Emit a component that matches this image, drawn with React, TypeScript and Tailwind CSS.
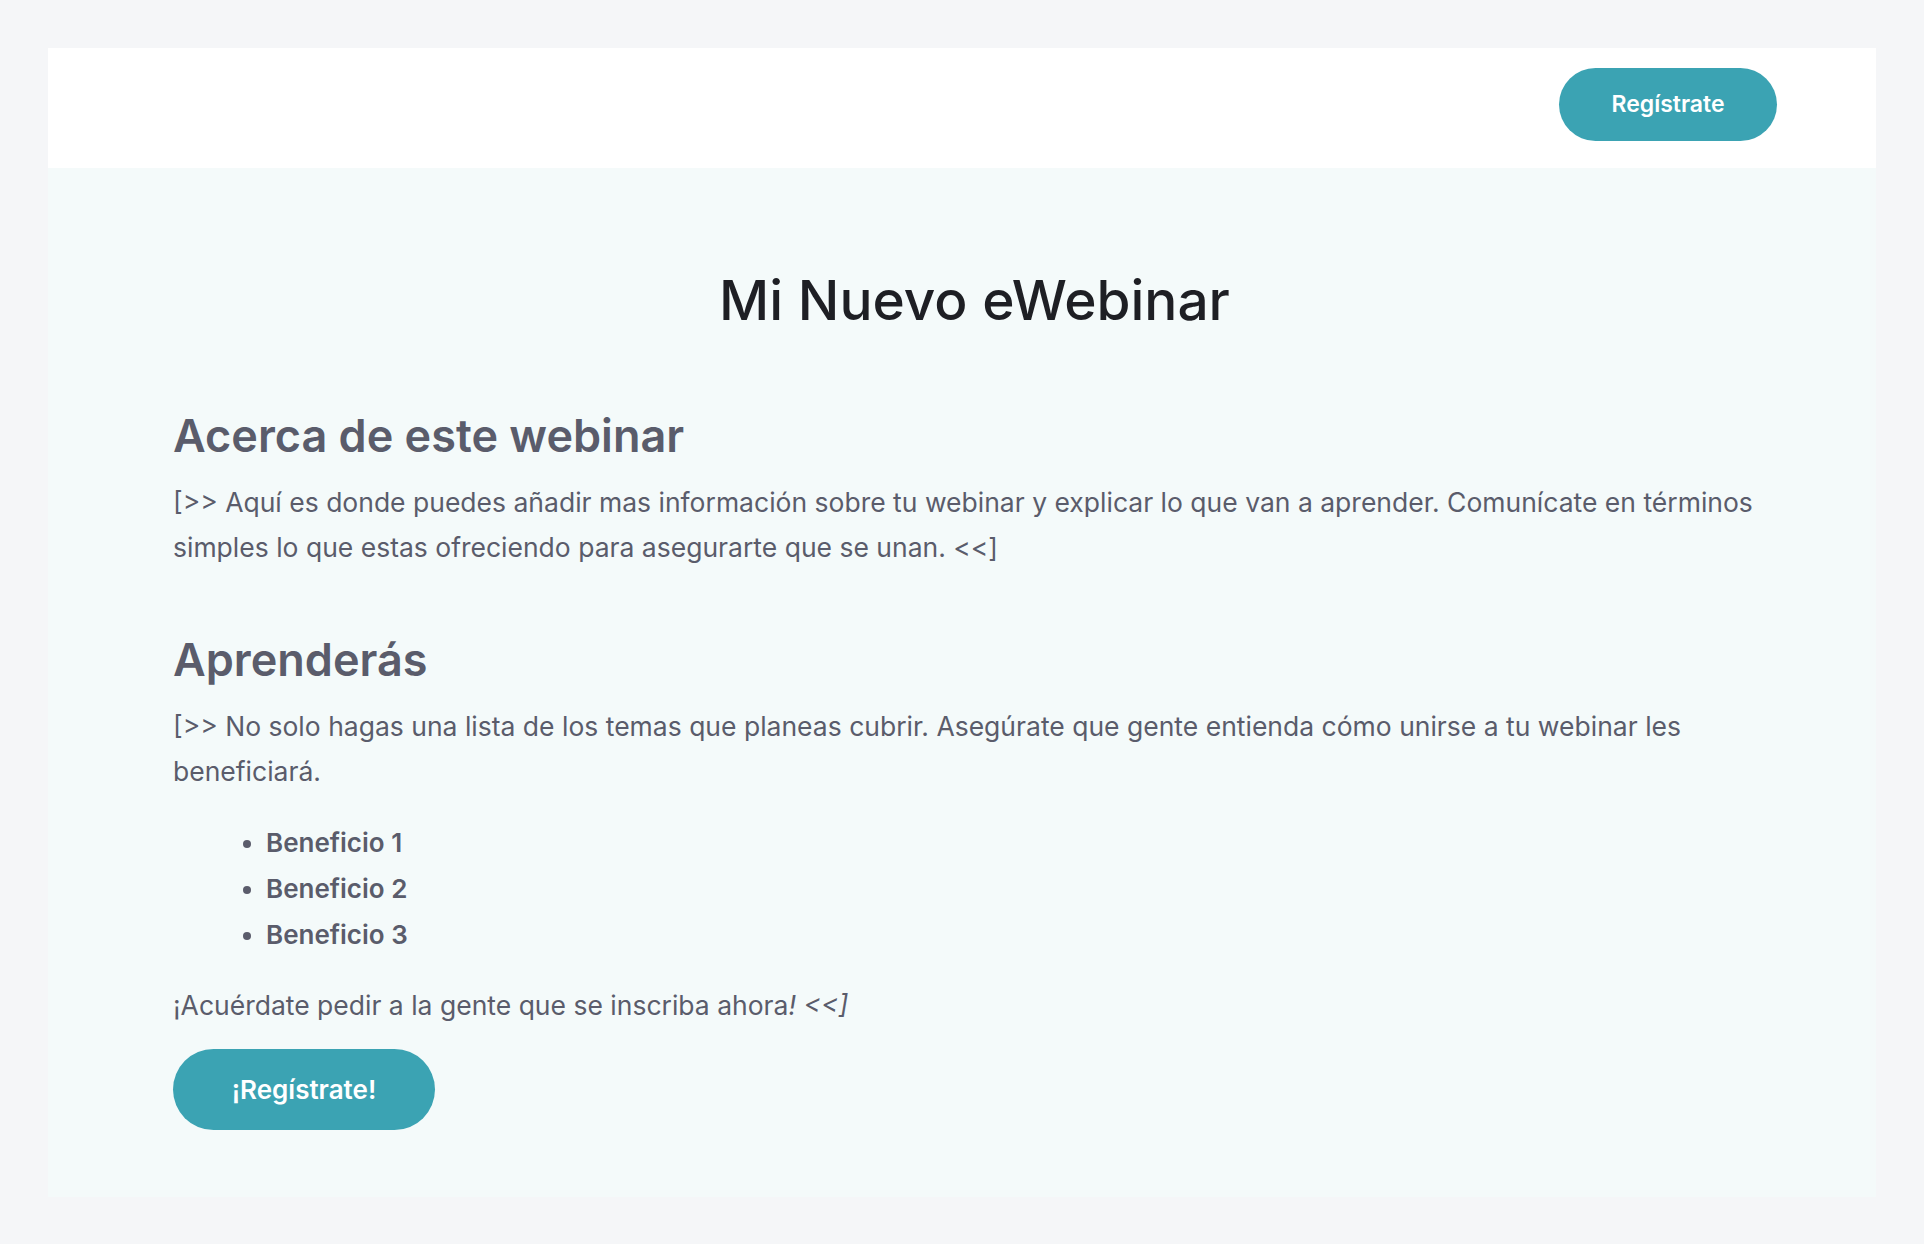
import React from 'react';

const benefits = ['Beneficio 1', 'Beneficio 2', 'Beneficio 3'];

const App = () => {
  return (
    <div className="min-h-screen bg-[#f5f6f8] p-[48px]" style={{ fontFamily: 'Inter, "Noto Sans", sans-serif' }}>
      <div className="flex flex-col">
        {/* Header */}
        <div className="flex h-[120px] items-start justify-end bg-white pr-[99px] pt-[20px]">
          <button className="h-[73px] w-[218px] rounded-full bg-[#3ba3b3] text-[23px] font-semibold text-white">
            Regístrate
          </button>
        </div>

        {/* Body */}
        <div className="bg-[#f4fafa] pb-[67px] pl-[125px] pr-[100px] pt-[99px] text-[#5a5c6b]">
          <h1 className="text-center text-[55px] font-medium leading-[1.2] text-[#1e1f24]">Mi Nuevo eWebinar</h1>

          <h2 className="mt-[76px] text-[45px] font-semibold leading-[1.2]">Acerca de este webinar</h2>
          <p className="mt-[17px] text-[26.5px] leading-[45px]">
            [&gt;&gt; Aquí es donde puedes añadir mas información sobre tu webinar y explicar lo que van a aprender. Comunícate en términos simples lo que estas ofreciendo para asegurarte que se unan. &lt;&lt;]
          </p>

          <h2 className="mt-[63px] text-[45px] font-semibold leading-[1.2]">Aprenderás</h2>
          <p className="mt-[17px] text-[26.5px] leading-[45px]">
            [&gt;&gt; No solo hagas una lista de los temas que planeas cubrir. Asegúrate que gente entienda cómo unirse a tu webinar les beneficiará.
          </p>

          <ul className="mt-[26px] list-disc pl-[93px] text-[26px] font-semibold leading-[46px]">
            {benefits.map((b) => (
              <li key={b}>{b}</li>
            ))}
          </ul>

          <p className="mt-[25px] text-[26.5px] leading-[45px]">
            ¡Acuérdate pedir a la gente que se inscriba ahora<em>! &lt;&lt;]</em>
          </p>

          <button className="mt-[21px] h-[81px] w-[262px] rounded-full bg-[#3ba3b3] text-[26px] font-semibold text-white">
            ¡Regístrate!
          </button>
        </div>
      </div>
    </div>
  );
};

export default App;
